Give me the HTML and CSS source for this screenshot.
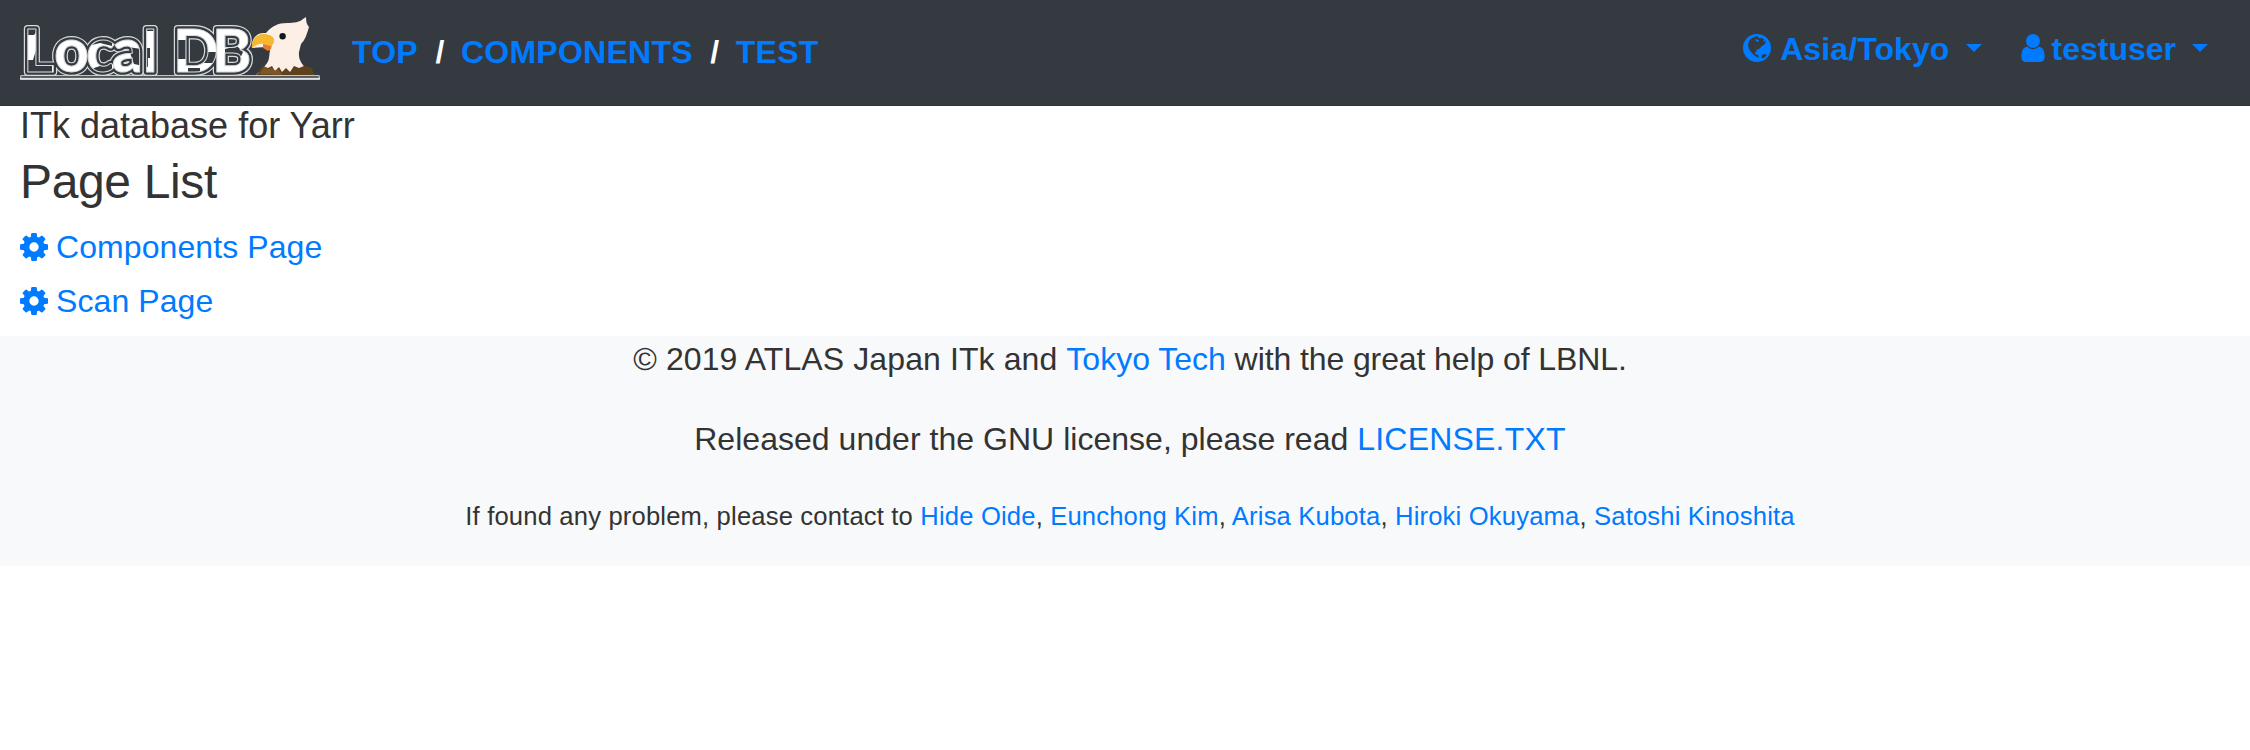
FILE: index.html
```html
<!DOCTYPE html>
<html lang="en">
<head>
<meta charset="utf-8">
<title>Local DB</title>
<link rel="stylesheet" href="styles.css">
</head>
<body>
<svg class="sprite" aria-hidden="true">
  <symbol id="cog" viewBox="128 128 1536 1536"><path d="M1152 896q0-106-75-181t-181-75-181 75-75 181 75 181 181 75 181-75 75-181zm512-109v222q0 12-8 23t-20 13l-185 28q-19 54-39 91 35 50 107 138 10 12 10 25t-9 23q-27 37-99 108t-94 71q-12 0-26-9l-138-108q-44 23-91 38-16 136-29 186-7 28-36 28h-222q-14 0-24.5-8.5t-11.5-21.5l-28-184q-49-16-90-37l-141 107q-10 9-25 9-14 0-25-11-126-114-165-168-7-10-7-23 0-12 8-23 15-21 51-66.5t54-70.5q-27-50-41-99l-183-27q-13-2-21-12.5t-8-23.5v-222q0-12 8-23t19-13l186-28q14-46 39-92-40-57-107-138-10-12-10-24 0-10 9-23 26-36 98.5-107.5t94.5-71.5q13 0 26 10l138 107q44-23 91-38 16-136 29-186 7-28 36-28h222q14 0 24.5 8.5t11.5 21.5l28 184q49 16 90 37l142-107q9-9 24-9 13 0 25 10 129 119 165 170 7 8 7 22 0 12-8 23-15 21-51 66.5t-54 70.5q26 50 41 98l183 28q13 2 21 12.5t8 23.5z"/></symbol>
</svg>
<nav class="navbar">
  <a class="brand">
    <svg width="300" height="66" viewBox="20 16 300 66">
      <defs>
        <pattern id="patches" patternUnits="userSpaceOnUse" x="0" y="0" width="340" height="100">
          <rect width="340" height="100" fill="#fff"/>
          <g fill="#343a40">
            <path d="M22 22h28v9h-13l-3 4h-12zM22 60h11l3-10h4v10h12v18H22z"/>
            <path d="M90 34h22v12l-12-3-8 2zM94 68l18-6v16H92zM128 47l20 3v17l-14-3z"/>
            <path d="M143 22h16v9h-16zM143 48h7v10h-7zM174 40h16v19h-16zM202 52h14v11h-16zM188 68h12v10h-12zM225 49l12-3 6 6-4 9-14-1z"/>
          </g>
        </pattern>
        <clipPath id="above-rule"><rect x="20" y="16" width="235" height="60"/></clipPath>
        <g id="wordmark" font-family="Lato, sans-serif" font-weight="700" stroke-linejoin="round">
          <text y="72"><tspan x="23" font-size="60">L</tspan><tspan x="54" font-size="61">o</tspan><tspan x="86" font-size="61">c</tspan><tspan x="112" font-size="61">a</tspan><tspan x="143" font-size="58">l</tspan><tspan x="173" font-size="60">D</tspan><tspan x="212" font-size="60">B</tspan></text>
        </g>
      </defs>
      <g clip-path="url(#above-rule)">
        <use href="#wordmark" fill="none" stroke="#d8dbdb" stroke-width="8"/>
        <use href="#wordmark" fill="none" stroke="#343a40" stroke-width="5.6"/>
        <use href="#wordmark" fill="url(#patches)" stroke="#d8dbdb" stroke-width="1"/>
      </g>
      <path d="M20.8 75.7H319.2V79H20.8z" fill="#343a40" stroke="#dfe4e2" stroke-width="1"/>
      <path d="M20 78.8h300" stroke="#dfe4e2" stroke-width="2"/>
      <path d="M256 75c5-6 12-10 13-17l1-8-4-3-14 1c-1-10 5-16 14-15 6-7 12-10 21-10 7 0 13-1 16-4l3-2c0 5 1 8 3 10-2 7-4 13-8 17l-2 8c-1 8 4 14 8 17l7 6z" fill="#fcefe6"/>
      <path d="M256 75c4-3 4-8 7-9l5 2 4-2 3 5 4-4 3 5 4-4 4 4 4-6 5 2 5-2 6 1c3 2 3 6 4 8z" fill="#5f411c"/>
      <path d="M259 74l5-7 5 2 3-1 3 3 3-2 3 4 1 2z" fill="#7c5628"/>
      <path d="M263 44l9 1-1 4-3 2-5-3z" fill="#ec7a2c"/>
      <path d="M252 48c-1-8 5-15 13-14 6 1 9 3 9 6 0 4-2 6-4 6l-6-2c-5-1-8 1-12 4z" fill="#f5b82e"/>
      <circle cx="282.6" cy="36.3" r="3.2" fill="#141a1c"/>
    </svg>
  </a>
  <div class="crumbs"><a>TOP</a><span>/</span><a>COMPONENTS</a><span>/</span><a>TEST</a></div>
  <div class="menus">
    <a class="menu">
      <svg class="icon-globe" viewBox="0 0 28 28"><circle cx="14" cy="14" r="14" fill="currentColor"/><path fill="#343a40" d="M6 7l3-3 5-2 2 2 2 0 3 1-1 3 3-2-1 4-3 2-3 3-3 1 1 2-2 0 0 2 3 1 1 3-4-2-4-4-2-3-1-4zM18 24l1-3 3-1 2 1-3 3z"/><path fill="currentColor" d="M12 5l4 1-1 2-2-1z"/></svg>
      <span class="zone">Asia/Tokyo</span><i class="caret"></i>
    </a>
    <a class="menu">
      <svg class="icon-user" viewBox="256 128 1280 1536"><path fill="currentColor" d="M1536 1399q0 109-62.5 187t-150.5 78h-854q-88 0-150.5-78t-62.5-187q0-85 8.5-160.5t31.5-152 58.5-131 94-89 134.5-34.5q131 128 313 128t313-128q76 0 134.5 34.5t94 89 58.5 131 31.5 152 8.5 160.5zm-256-887q0 159-112.5 271.5t-271.5 112.5-271.5-112.5-112.5-271.5 112.5-271.5 271.5-112.5 271.5 112.5 112.5 271.5z"/></svg>
      <span>testuser</span><i class="caret"></i>
    </a>
  </div>
</nav>
<main class="content">
  <div class="lead">ITk database for Yarr</div>
  <h2 class="heading">Page List</h2>
  <a class="page-link"><svg class="icon-cog"><use href="#cog"/></svg><span>Components Page</span></a>
  <a class="page-link"><svg class="icon-cog"><use href="#cog"/></svg><span>Scan Page</span></a>
</main>
<footer class="footer">
  <p><span class="wide">© 2019 ATLAS Japan ITk and </span><a>Tokyo Tech</a><span class="narrow"> with the great help of LBNL.</span></p>
  <p class="license">Released under the GNU license, please read <a>LICENSE.TXT</a></p>
  <p class="contact">If found any problem, please contact to <a>Hide Oide</a>, <a>Eunchong Kim</a>, <a>Arisa Kubota</a>, <a>Hiroki Okuyama</a>, <a>Satoshi Kinoshita</a></p>
</footer>
</body>
</html>
```
FILE: styles.css
```css
* { box-sizing: border-box; }
body {
  margin: 0;
  background: #fff;
  color: #333;
  font: 32px/48px "Liberation Sans", Arial, sans-serif;
}
a { color: #007bff; text-decoration: none; }
.sprite { display: block; width: 0; height: 0; }
.navbar {
  display: flex;
  align-items: flex-start;
  height: 106px;
  padding: 0 42px 0 20px;
  background: #343a40;
  border-bottom: 1px solid #2f3136;
  font-weight: 700;
}
.brand { display: flex; padding-top: 16px; }
.crumbs { display: flex; padding: 28px 0 0 32px; color: #fff; letter-spacing: .25px; }
.crumbs span { width: 43px; padding-left: 17.5px; }
.menus { display: flex; margin-left: auto; padding-top: 25px; gap: 39px; }
.menu { display: flex; align-items: flex-start; }
.zone { letter-spacing: .1px; }
.icon-globe { width: 28px; height: 28px; margin: 9px 9px 0 0; }
.icon-user { width: 24px; height: 28px; margin: 9px 7px 0 0; }
.caret {
  margin: 19px 0 0 16px;
  border: 8px solid transparent;
  border-top-color: currentColor;
  border-bottom: 0;
}
.content { height: 230px; padding-left: 20px; }
.lead { padding-top: 1px; font-size: 36px; line-height: 38px; }
.heading {
  margin: 8px 0 12px;
  font-size: 48px;
  font-weight: 400;
  line-height: 58px;
  letter-spacing: -.35px;
}
.page-link { display: flex; align-items: center; height: 48px; margin-bottom: 6px; letter-spacing: .08px; }
.icon-cog { width: 28px; height: 28px; margin-right: 8px; fill: currentColor; }
.footer {
  height: 230px;
  padding-left: 10px;
  background: #f8f9fa;
  text-align: center;
}
.footer p { margin: 0 0 32px; }
.footer p:first-child { line-height: 46px; margin-bottom: 34px; }
.wide { letter-spacing: .1px; }
.narrow { letter-spacing: -.1px; }
.footer .license { line-height: 46px; letter-spacing: .03px; }
.license a { letter-spacing: .2px; }
.footer .contact { font-size: 25.6px; line-height: 44px; letter-spacing: .17px; }
```
